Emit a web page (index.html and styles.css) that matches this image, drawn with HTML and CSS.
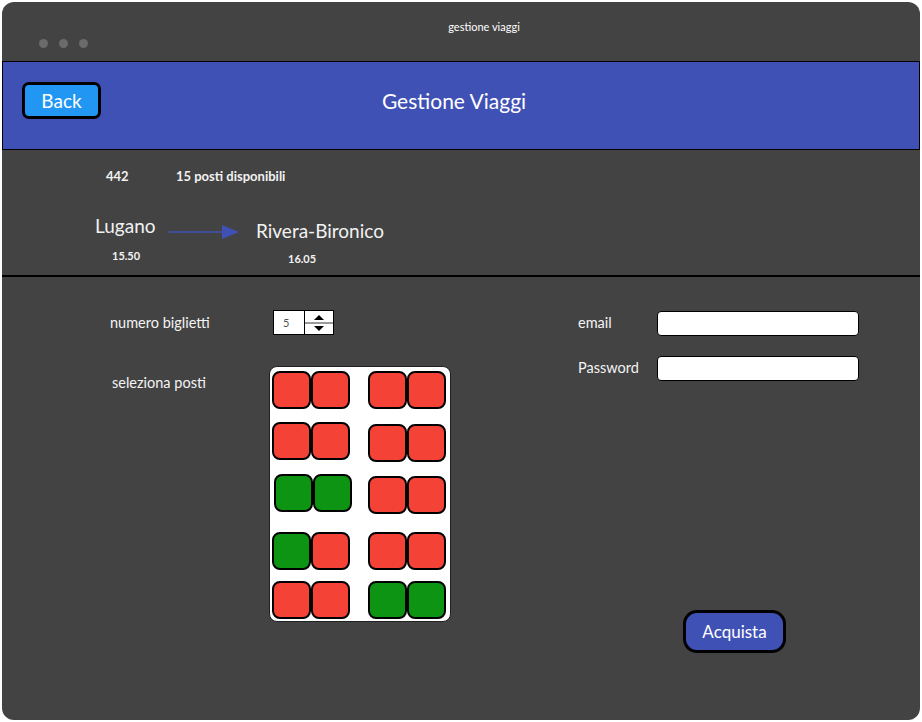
FILE: index.html
```html
<!DOCTYPE html>
<html lang="it">
<head>
<meta charset="utf-8">
<title>gestione viaggi</title>
<link rel="stylesheet" href="styles.css">
</head>
<body>
<div class="window">
  <div class="titlebar">
    <div class="wtitle">gestione viaggi</div>
    <div class="dots"><span></span><span></span><span></span></div>
  </div>
  <header class="appbar">
    <button class="back">Back</button>
    <h1 class="apptitle">Gestione Viaggi</h1>
  </header>
  <section class="trip">
    <div class="meta"><span class="num">442</span><span class="avail">15 posti disponibili</span></div>
    <div class="route">
      <div class="stop from">
        <div class="city">Lugano</div>
        <div class="time">15.50</div>
      </div>
      <svg class="arrow" width="72" height="16" viewBox="0 0 72 16">
        <line x1="0" y1="8" x2="56" y2="8" stroke="#3f51b5" stroke-width="1.4"/>
        <polygon points="54,1 71,8 54,15" fill="#3f51b5"/>
      </svg>
      <div class="stop to">
        <div class="city">Rivera-Bironico</div>
        <div class="time">16.05</div>
      </div>
    </div>
  </section>
  <main class="booking">
    <div class="seats-col">
      <label class="lbl">numero biglietti</label>
      <div class="spinner">
        <span class="spin-val">5</span>
        <span class="spin-btns">
          <span class="up"></span>
          <span class="mid"></span>
          <span class="down"></span>
        </span>
      </div>
      <label class="lbl lbl-seats">seleziona posti</label>
      <div class="plane">
        <div class="row r1">
          <div class="pair"><span class="seat red"></span><span class="seat red"></span></div>
          <div class="pair"><span class="seat red"></span><span class="seat red"></span></div>
        </div>
        <div class="row r2">
          <div class="pair"><span class="seat red"></span><span class="seat red"></span></div>
          <div class="pair low"><span class="seat red"></span><span class="seat red"></span></div>
        </div>
        <div class="row r3">
          <div class="pair shift"><span class="seat green"></span><span class="seat green"></span></div>
          <div class="pair low shift"><span class="seat red"></span><span class="seat red"></span></div>
        </div>
        <div class="row r4">
          <div class="pair"><span class="seat green"></span><span class="seat red"></span></div>
          <div class="pair shift"><span class="seat red"></span><span class="seat red"></span></div>
        </div>
        <div class="row r5">
          <div class="pair"><span class="seat red"></span><span class="seat red"></span></div>
          <div class="pair"><span class="seat green"></span><span class="seat green"></span></div>
        </div>
      </div>
    </div>
    <div class="login-col">
      <div class="form">
        <label class="lbl">email</label>
        <input class="field" type="text">
        <label class="lbl">Password</label>
        <input class="field" type="password">
      </div>
      <button class="buy">Acquista</button>
    </div>
  </main>
</div>
</body>
</html>
```

FILE: styles.css
```css
* { box-sizing: border-box; }
html, body { margin: 0; padding: 0; background: #ffffff; }
body { font-family: "Lato", "Open Sans", sans-serif; color: #f2f2f2; }

.window {
  margin: 2px;
  width: 918px;
  height: 718px;
  border-radius: 12px;
  background: #434343;
  overflow: hidden;
  display: flex;
  flex-direction: column;
}

.titlebar { height: 59px; padding-top: 18px; }
.wtitle {
  font-size: 11px;
  line-height: 13px;
  text-align: center;
  padding-left: 46px;
  color: #ffffff;
}
.dots { display: flex; gap: 11px; padding-left: 37px; margin-top: 6px; }
.dots span { width: 9px; height: 9px; border-radius: 50%; background: #6b6b6b; }

.appbar {
  height: 89px;
  border: 1px solid #000;
  background: #3f51b5;
  display: grid;
  align-items: start;
  padding: 20px 19px 0 19px;
}
.back {
  grid-area: 1 / 1;
  justify-self: start;
  width: 79px;
  height: 37px;
  border: 3px solid #000;
  border-radius: 7px;
  background: #2196f3;
  color: #fff;
  font-family: inherit;
  font-size: 19px;
  padding: 0;
}
.apptitle {
  grid-area: 1 / 1;
  justify-self: center;
  margin: 0 14px 0 0;
  font-size: 21px;
  line-height: 37px;
  font-weight: 400;
  color: #fff;
}

.trip { height: 127px; border-bottom: 2px solid #000; padding-top: 18px; }
.meta { padding-left: 104px; font-size: 13px; line-height: 16px; font-weight: 700; display: flex; }
.num { width: 70px; }
.route { display: flex; align-items: flex-start; padding-left: 93px; margin-top: 30px; }
.city { font-size: 19px; line-height: 23px; }
.time { font-size: 11px; line-height: 13px; font-weight: 700; }
.from { width: 73px; }
.from .time { margin: 12px 0 0 17px; }
.arrow { margin-top: 10px; flex: none; }
.to { margin: 5px 0 0 16px; }
.to .time { margin: 10px 0 0 32px; }

.booking { display: flex; align-items: flex-start; padding-top: 33px; }
.seats-col {
  display: grid;
  grid-template-columns: 159px 182px;
  row-gap: 31px;
  align-items: center;
  padding-left: 108px;
}
.lbl { font-size: 14.5px; line-height: 17px; color: #f4f4f4; }
.lbl-seats { align-self: start; margin: 8px 0 0 2px; }

.spinner {
  margin-left: 4px;
  width: 61px;
  height: 25px;
  border: 1px solid #000;
  background: #fff;
  display: flex;
}
.spin-val {
  width: 31px;
  border-right: 1px solid #000;
  color: #555;
  font-size: 11px;
  line-height: 23px;
  padding-left: 9px;
}
.spin-btns { flex: 1; display: flex; flex-direction: column; align-items: center; justify-content: space-between; padding: 4px 0 3px; }
.up { width: 0; height: 0; border-left: 5px solid transparent; border-right: 5px solid transparent; border-bottom: 5px solid #000; }
.down { width: 0; height: 0; border-left: 5px solid transparent; border-right: 5px solid transparent; border-top: 5px solid #000; }
.mid { width: 100%; height: 2px; background: #999; }

.plane {
  width: 182px;
  height: 256px;
  background: #fff;
  border: 1px solid #222;
  border-radius: 8px;
  padding: 4px 4px 0 2px;
  display: flex;
  flex-direction: column;
}
.row { display: flex; justify-content: space-between; align-items: flex-start; }
.r2 { margin-top: 13px; }
.r3 { margin-top: 12px; }
.r4 { margin-top: 18px; }
.r5 { margin-top: 11px; }
.pair { display: flex; }
.pair.low { margin-top: 2px; }
.pair.shift { margin-left: 2px; }
.seat {
  width: 39px;
  height: 38px;
  border: 2px solid #000;
  border-radius: 8px;
}
.red { background: #f44336; }
.green { background: #0d9413; }

.login-col { margin-left: 127px; display: flex; flex-direction: column; align-items: flex-start; }
.form {
  display: grid;
  grid-template-columns: 79px 202px;
  row-gap: 20px;
  align-items: center;
  margin-top: 1px;
}
.form .lbl { margin-bottom: 3px; }
.field {
  width: 202px;
  height: 25px;
  border: 1px solid #000;
  border-radius: 4px;
  background: #fff;
  padding: 0 4px;
  font-family: inherit;
}
.buy {
  margin: 229px 0 0 105px;
  width: 103px;
  height: 43px;
  border: 3px solid #000;
  border-radius: 14px;
  background: #3f51b5;
  color: #fff;
  font-family: inherit;
  font-size: 17px;
  padding: 0;
}
```
